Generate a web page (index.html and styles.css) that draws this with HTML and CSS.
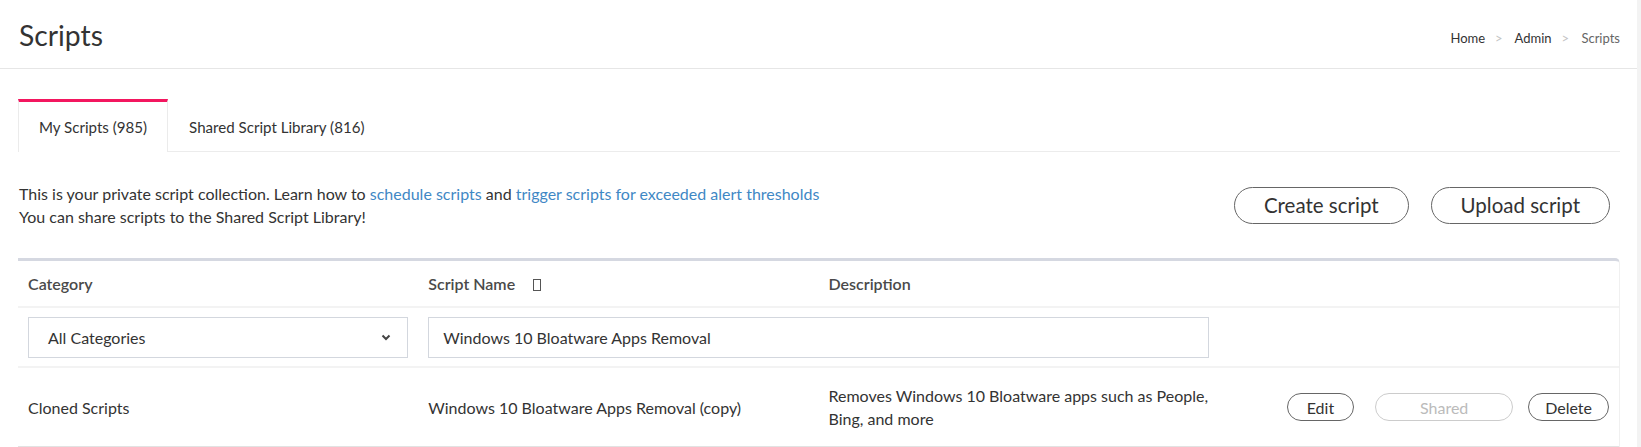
FILE: index.html
```html
<!DOCTYPE html>
<html>
   <head>
      <meta name="viewport" content="width=device-width, initial-scale=1.0"/>
      <link rel="stylesheet" href="styles.css">
   </head>
   <body>
      <div class="page">
         <!--page title and breadcrumb-->
         <div class="header">
            <h1>Scripts</h1>
            <div class="crumbs">
               <a href="#">Home</a><span class="sep">&gt;</span>
               <a href="#">Admin</a><span class="sep">&gt;</span>
               <span class="here">Scripts</span>
            </div>
         </div>
         <div class="content">
            <!--tabs-->
            <ul class="tabs">
               <li class="active">My Scripts (985)</li>
               <li>Shared Script Library (816)</li>
            </ul>
            <div class="intro">
               <p>This is your private script collection. Learn how to <a href="#">schedule scripts</a> and <a href="#">trigger scripts for exceeded alert thresholds</a><br>
               You can share scripts to the Shared Script Library!</p>
               <div class="actions">
                  <button class="big">Create script</button>
                  <button class="big">Upload script</button>
               </div>
            </div>
            <!--script list-->
            <div class="card">
               <table>
                  <tr class="head">
                     <th>Category</th>
                     <th>Script Name <span class="sort"></span></th>
                     <th>Description</th>
                     <th></th>
                  </tr>
                  <tr class="filter">
                     <td>
                        <div class="select">All Categories
                           <svg width="10" height="7" viewBox="0 0 10 7"><path d="M1.5 1.5 L5 5 L8.5 1.5" fill="none" stroke="#444" stroke-width="2"/></svg>
                        </div>
                     </td>
                     <td colspan="2"><input type="text" value="Windows 10 Bloatware Apps Removal"></td>
                     <td></td>
                  </tr>
                  <tr class="row">
                     <td>Cloned Scripts</td>
                     <td>Windows 10 Bloatware Apps Removal (copy)</td>
                     <td>Removes Windows 10 Bloatware apps such as People, Bing, and more</td>
                     <td>
                        <div class="btns">
                           <button class="small edit">Edit</button>
                           <button class="small shared" disabled>Shared</button>
                           <button class="small">Delete</button>
                        </div>
                     </td>
                  </tr>
               </table>
            </div>
         </div>
      </div>
   </body>
</html>
```

FILE: styles.css
```css
html {
background: #f3f3f3;
}
body {
margin: 0 4px 0 0;
background: white;
font-family: Lato, "Liberation Sans", sans-serif;
color: #333;
min-height: 447px;
}
a {
color: #3f88c5;
text-decoration: none;
}
.header {
height: 68px;
border-bottom: 1px solid #e6e6e6;
display: flex;
align-items: center;
justify-content: space-between;
padding: 0 17px 0 19px;
}
.header h1 {
margin: 0;
font-size: 28.3px;
font-weight: 400;
color: #333;
padding-top: 2px;
}
.crumbs {
font-size: 13px;
padding-top: 8px;
}
.crumbs a {
color: #333;
}
.crumbs .sep {
color: #c4c4c4;
margin: 0 9px 0 10px;
}
.crumbs .here {
color: #666;
}
.content {
padding: 30px 17px 0 18px;
}
.tabs {
list-style-type: none;
margin: 0;
padding: 0;
display: flex;
border-bottom: 1px solid #ececec;
}
.tabs li {
height: 53px;
box-sizing: border-box;
padding: 0 20px 0 20px;
display: flex;
align-items: center;
font-size: 15.1px;
border-top: 3px solid transparent;
border-left: 1px solid transparent;
border-right: 1px solid transparent;
margin-bottom: -1px;
}
.tabs li.active {
border-top-color: #f3165f;
border-left-color: #ebebeb;
border-right-color: #ebebeb;
background: white;
}
.intro {
display: flex;
align-items: center;
justify-content: space-between;
margin-top: 30px;
}
.intro p {
margin: 0;
font-size: 16px;
line-height: 23px;
padding-left: 1px;
}
.actions {
display: flex;
gap: 22px;
padding-right: 10px;
}
button {
font-family: Lato, "Liberation Sans", sans-serif;
background: white;
color: #333;
border: 1px solid #666;
}
.big {
height: 37px;
border-radius: 19px;
font-size: 20.5px;
padding: 0 29px;
}
.card {
margin-top: 30px;
border-top: 3px solid #d5d8e1;
border-right: 1px solid #f0f0f0;
border-top-right-radius: 5px;
}
table {
width: 100%;
table-layout: fixed;
border-collapse: collapse;
}
th, td {
text-align: left;
padding: 0 10px;
font-size: 16px;
}
.head th {
height: 45px;
font-weight: 600;
color: #4a4a4a;
border-bottom: 2px solid #f3f3f3;
}
.sort {
display: inline-block;
width: 6px;
height: 10px;
border: 1px solid #555;
margin-left: 14px;
vertical-align: -1px;
}
.filter td {
height: 58px;
border-bottom: 2px solid #f3f3f3;
}
.select, input {
box-sizing: border-box;
height: 41px;
border: 1px solid #d3d7de;
font-family: Lato, "Liberation Sans", sans-serif;
font-size: 16px;
color: #333;
}
.select {
display: flex;
align-items: center;
justify-content: space-between;
padding: 0 16px 0 19px;
}
input {
width: 100%;
padding: 0 14px;
outline: none;
}
.row td {
height: 78px;
line-height: 23px;
border-bottom: 1px solid #e2e2e2;
}
.btns {
display: flex;
justify-content: flex-end;
}
.small {
height: 28px;
border-radius: 14px;
font-size: 16px;
padding: 0 16px;
}
.small.edit {
padding: 0 19px;
}
.small.shared {
width: 138px;
margin: 0 15px 0 21px;
}
.small:disabled {
color: #bbb;
border-color: #ccc;
}
```
